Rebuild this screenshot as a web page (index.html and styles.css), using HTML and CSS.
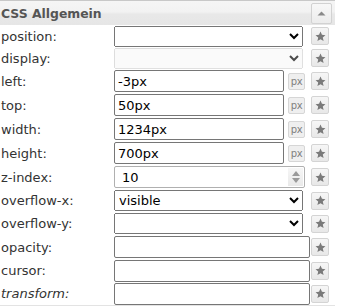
FILE: index.html
```html
<!DOCTYPE html>
<html>
<head>
<meta charset="utf-8">
<link rel="stylesheet" href="styles.css">
</head>
<body>
<div class="panel">
  <div class="head">
    <span class="title">CSS Allgemein</span>
    <span class="collapse"><svg width="9" height="5" viewBox="0 0 9 5"><polygon points="0.5,4.5 4.5,0.5 8.5,4.5" fill="#8a8a8a"/></svg></span>
  </div>

  <div class="row r-sel">
    <label class="lbl">position:</label>
    <div class="ctl"><select class="sel"><option></option></select></div>
    <span class="btn"><svg class="st" viewBox="0 0 12 12"><polygon points="6,0.6 7.6,4.1 11.4,4.5 8.5,7 9.4,10.9 6,8.9 2.6,10.9 3.5,7 0.6,4.5 4.4,4.1"/></svg></span>
  </div>
  <div class="row r-sel">
    <label class="lbl">display:</label>
    <div class="ctl"><select class="sel" disabled><option></option></select></div>
    <span class="btn"><svg class="st" viewBox="0 0 12 12"><polygon points="6,0.6 7.6,4.1 11.4,4.5 8.5,7 9.4,10.9 6,8.9 2.6,10.9 3.5,7 0.6,4.5 4.4,4.1"/></svg></span>
  </div>
  <div class="row">
    <label class="lbl">left:</label>
    <div class="ctl"><input class="inp short" value="-3px"><span class="px">px</span></div>
    <span class="btn"><svg class="st" viewBox="0 0 12 12"><polygon points="6,0.6 7.6,4.1 11.4,4.5 8.5,7 9.4,10.9 6,8.9 2.6,10.9 3.5,7 0.6,4.5 4.4,4.1"/></svg></span>
  </div>
  <div class="row">
    <label class="lbl">top:</label>
    <div class="ctl"><input class="inp short" value="50px"><span class="px">px</span></div>
    <span class="btn"><svg class="st" viewBox="0 0 12 12"><polygon points="6,0.6 7.6,4.1 11.4,4.5 8.5,7 9.4,10.9 6,8.9 2.6,10.9 3.5,7 0.6,4.5 4.4,4.1"/></svg></span>
  </div>
  <div class="row">
    <label class="lbl">width:</label>
    <div class="ctl"><input class="inp short" value="1234px"><span class="px">px</span></div>
    <span class="btn"><svg class="st" viewBox="0 0 12 12"><polygon points="6,0.6 7.6,4.1 11.4,4.5 8.5,7 9.4,10.9 6,8.9 2.6,10.9 3.5,7 0.6,4.5 4.4,4.1"/></svg></span>
  </div>
  <div class="row">
    <label class="lbl">height:</label>
    <div class="ctl"><input class="inp short" value="700px"><span class="px">px</span></div>
    <span class="btn"><svg class="st" viewBox="0 0 12 12"><polygon points="6,0.6 7.6,4.1 11.4,4.5 8.5,7 9.4,10.9 6,8.9 2.6,10.9 3.5,7 0.6,4.5 4.4,4.1"/></svg></span>
  </div>
  <div class="row">
    <label class="lbl">z-index:</label>
    <div class="ctl">
      <div class="num"><span class="numval">10</span>
        <span class="spin">
          <svg width="8" height="5" viewBox="0 0 8 5"><polygon points="0,5 4,0 8,5" fill="#9a9a9a"/></svg>
          <svg width="8" height="5" viewBox="0 0 8 5"><polygon points="0,0 8,0 4,5" fill="#9a9a9a"/></svg>
        </span>
      </div>
    </div>
    <span class="btn"><svg class="st" viewBox="0 0 12 12"><polygon points="6,0.6 7.6,4.1 11.4,4.5 8.5,7 9.4,10.9 6,8.9 2.6,10.9 3.5,7 0.6,4.5 4.4,4.1"/></svg></span>
  </div>
  <div class="row r-sel2">
    <label class="lbl">overflow-x:</label>
    <div class="ctl"><select class="sel"><option>visible</option></select></div>
    <span class="btn"><svg class="st" viewBox="0 0 12 12"><polygon points="6,0.6 7.6,4.1 11.4,4.5 8.5,7 9.4,10.9 6,8.9 2.6,10.9 3.5,7 0.6,4.5 4.4,4.1"/></svg></span>
  </div>
  <div class="row r-sel2">
    <label class="lbl">overflow-y:</label>
    <div class="ctl"><select class="sel"><option></option></select></div>
    <span class="btn"><svg class="st" viewBox="0 0 12 12"><polygon points="6,0.6 7.6,4.1 11.4,4.5 8.5,7 9.4,10.9 6,8.9 2.6,10.9 3.5,7 0.6,4.5 4.4,4.1"/></svg></span>
  </div>
  <div class="row">
    <label class="lbl">opacity:</label>
    <div class="ctl"><input class="inp full" value=""></div>
    <span class="btn"><svg class="st" viewBox="0 0 12 12"><polygon points="6,0.6 7.6,4.1 11.4,4.5 8.5,7 9.4,10.9 6,8.9 2.6,10.9 3.5,7 0.6,4.5 4.4,4.1"/></svg></span>
  </div>
  <div class="row r-sel2">
    <label class="lbl">cursor:</label>
    <div class="ctl"><input class="inp full" value=""></div>
    <span class="btn"><svg class="st" viewBox="0 0 12 12"><polygon points="6,0.6 7.6,4.1 11.4,4.5 8.5,7 9.4,10.9 6,8.9 2.6,10.9 3.5,7 0.6,4.5 4.4,4.1"/></svg></span>
  </div>
  <div class="row last">
    <label class="lbl it">transform:</label>
    <div class="ctl"><input class="inp full" value=""></div>
    <span class="btn"><svg class="st" viewBox="0 0 12 12"><polygon points="6,0.6 7.6,4.1 11.4,4.5 8.5,7 9.4,10.9 6,8.9 2.6,10.9 3.5,7 0.6,4.5 4.4,4.1"/></svg></span>
  </div>
</div>
</body>
</html>
```
FILE: styles.css
```css
html, body {
  margin: 0;
  padding: 0;
  background: #fff;
}
body {
  font-family: "DejaVu Sans", Verdana, sans-serif;
  font-size: 13px;
  color: #333;
}
.panel {
  width: 335px;
}
.head {
  height: 24px;
  border-top: 1px solid #c8c8c8;
  background: linear-gradient(#f5f5f5 0%, #f2f2f2 45%, #e8e8e8 55%, #e6e6e6 100%);
  display: flex;
  align-items: center;
  justify-content: space-between;
  padding: 0 3px 0 1px;
}
.title {
  font-weight: bold;
  font-size: 12.4px;
  color: #555;
}
.collapse {
  width: 19px;
  height: 19px;
  border: 1px solid #d2d2d2;
  border-radius: 2px;
  background: linear-gradient(#f8f8f8, #ececec);
  display: flex;
  align-items: center;
  justify-content: center;
  margin-top: 1px;
}
.row {
  display: flex;
  align-items: center;
  height: 24px;
}
.row.r-sel {
  height: 22px;
}
.row.r-sel2 {
  height: 23px;
}
.row.last {
  border-bottom: 1px solid #e3e3e3;
  height: 23px;
}
.lbl {
  width: 114px;
  padding-left: 1px;
  box-sizing: border-box;
  color: #333;
  white-space: nowrap;
}
.lbl.it {
  font-style: italic;
}
.ctl {
  width: 196px;
  display: flex;
  align-items: center;
  gap: 4px;
}
.sel {
  width: 189px;
  height: 21px;
  font-family: "DejaVu Sans", Verdana, sans-serif;
  font-size: 13px;
  margin: 0;
  color: #000;
}
.inp {
  box-sizing: border-box;
  height: 22px;
  margin: 0;
  border: 1px solid #767676;
  border-radius: 2px;
  padding: 0 3px;
  font-family: "DejaVu Sans", Verdana, sans-serif;
  font-size: 13px;
  color: #000;
  background: #fff;
}
.inp.short {
  width: 170px;
}
.inp.full {
  width: 196px;
}
.px {
  box-sizing: border-box;
  width: 17px;
  height: 17px;
  border: 1px solid #d6d6d6;
  border-radius: 2px;
  background: #efefef;
  color: #808080;
  font-size: 10px;
  display: flex;
  align-items: center;
  justify-content: center;
  letter-spacing: -0.3px;
}
.num {
  box-sizing: border-box;
  width: 191px;
  height: 22px;
  border: 1px solid #b0b0b0;
  border-radius: 2px;
  display: flex;
  align-items: stretch;
  justify-content: space-between;
  background: #fff;
}
.numval {
  color: #000;
  padding-left: 7px;
  display: flex;
  align-items: center;
}
.spin {
  width: 15px;
  margin: 1px;
  background: linear-gradient(#f6f6f6, #e9e9e9);
  display: flex;
  flex-direction: column;
  align-items: center;
  justify-content: space-around;
  padding: 2px 0;
}
.btn {
  box-sizing: border-box;
  width: 18px;
  height: 18px;
  border: 1px solid #d4d4d4;
  border-radius: 2px;
  background: linear-gradient(#f6f6f6, #e8e8e8);
  display: flex;
  align-items: center;
  justify-content: center;
  margin-left: 1px;
}
.st {
  width: 11px;
  height: 11px;
  fill: #7a7a7a;
}
```
